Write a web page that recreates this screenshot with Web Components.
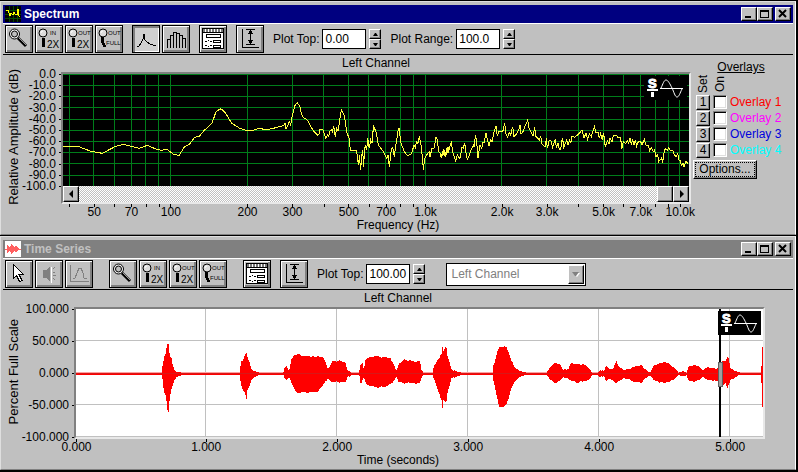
<!DOCTYPE html>
<html lang="en">
<head>
<meta charset="utf-8">
<title>Spectrum</title>
<style>
    html, body {
        margin: 0;
        background: #000;
    }
    body {
        display: grid;
        gap: 1px;
        padding: 1px 2px 2px 0;
        font: 12px/13px "Liberation Sans", Arial, sans-serif;
        color: #000;
    }
    .wide {
        margin-left: 7px;
    }
    .wider {
        margin-left: 12px;
    }
    .group {
        display: flex;
        gap: 2px;
    }
</style>
</head>
<body>
<sound-window title-text="Spectrum" icon="spectrum" active>
    <div class="group" slot="toolbar">
        <tool-button icon="zoom" label="Zoom"></tool-button>
        <tool-button icon="in" label="Zoom in"></tool-button>
        <tool-button icon="out" label="Zoom out"></tool-button>
        <tool-button icon="full" label="Zoom out full"></tool-button>
    </div>
    <div class="group" slot="toolbar">
        <tool-button icon="line" label="Line plot" pressed></tool-button>
        <tool-button icon="bars" label="Bar plot"></tool-button>
    </div>
    <tool-button slot="toolbar" icon="options" label="Options"></tool-button>
    <tool-button slot="toolbar" icon="scale" label="Scale"></tool-button>
    <spin-box slot="toolbar" label="Plot Top:" value="0.00"></spin-box>
    <spin-box slot="toolbar" label="Plot Range:" value="100.0"></spin-box>
    <spectrum-plot></spectrum-plot>
</sound-window>

<sound-window title-text="Time Series" icon="series">
    <div class="group" slot="toolbar">
        <tool-button icon="pointer" label="Select"></tool-button>
        <tool-button icon="speaker" label="Play" off></tool-button>
        <tool-button icon="curve" label="Curve" off></tool-button>
    </div>
    <div class="group wide" slot="toolbar">
        <tool-button icon="zoom" label="Zoom"></tool-button>
        <tool-button icon="in" label="Zoom in"></tool-button>
        <tool-button icon="out" label="Zoom out"></tool-button>
        <tool-button icon="full" label="Zoom out full"></tool-button>
    </div>
    <tool-button class="wide" slot="toolbar" icon="options" label="Options"></tool-button>
    <tool-button slot="toolbar" icon="scale" label="Scale"></tool-button>
    <spin-box slot="toolbar" label="Plot Top:" value="100.00"></spin-box>
    <channel-select class="wider" slot="toolbar"></channel-select>
    <series-plot></series-plot>
</sound-window>

<script>
// raised win95-style button, shared by several shadow roots
const BEVEL = `
    button {
        display: grid;
        place-items: center;
        box-sizing: border-box;
        margin: 0;
        padding: 0;
        border: 1px solid;
        border-color: #fff #000 #000 #fff;
        border-radius: 0;
        background: #c0c0c0;
        box-shadow: inset -1px -1px #808080;
        color: #000;
        font: inherit;
    }
    svg { display: block; }
`;

const lens = `
    <g shape-rendering="geometricPrecision">
        <circle cx="7" cy="7" r="4" fill="#ddd" stroke="#000"/>
        <path d="M5 7a2 2 0 0 1 2-2" stroke="#fff" fill="none"/>
    </g>`;

const ICONS = {
    zoom: `<g shape-rendering="geometricPrecision">
            <path d="M12 12L20 20" stroke="#000" stroke-width="3"/><path d="M13 12L20 19" stroke="#999"/>
            <circle cx="8.500" cy="8" r="5" fill="#f0f0f0" stroke="#000"/>
            <circle cx="8.500" cy="8" r="3" fill="#c0c0c0" stroke="#000"/>
        </g>`,
    in: `${lens}<path d="M7.500 12V21" stroke="#000" stroke-width="3"/>
        <text class="s" x="14" y="9">IN</text><text class="b" x="11" y="22">2X</text>`,
    out: `${lens}<path d="M7.500 12V21" stroke="#000" stroke-width="3"/>
        <text class="s" x="12" y="9">OUT</text><text class="b" x="11" y="22">2X</text>`,
    full: `${lens}<path d="M7 11L6 15L9 21" stroke="#000" stroke-width="3" fill="none"/>
        <text class="s" x="12" y="9">OUT</text><text class="s" x="10" y="19">FULL</text>`,
    line: `<path d="M4 20H6L8 17L9 15L10 13L11 8V12L12 14L14 16L17 18L20 19H23" fill="none" stroke="#000"/>`,
    bars: `<path d="M4.500 22V13.500H7.500V22M7.500 13V9.500H10.500V22M10.500 9V6.500H13.500V22M13.500 7H16.500V22M16.500 9.500H19.500V22M19.500 12.500H22.500V22" fill="none" stroke="#000"/>`,
    options: `<rect x="2.500" y="2.500" width="21" height="20" fill="#fff" stroke="#000"/>
        <path d="M3 4.500H23" stroke="#777" stroke-width="3" stroke-dasharray="2 1"/><path d="M3 6.500H23" stroke="#000"/>
        <path d="M6.500 8.500h14v3h-14zM13.500 14.500h7v2h-7zM13.500 19.500h7v2h-7z" fill="none" stroke="#000"/>
        <path d="M5 15.500h2m1-1h1m1 1h2M5 19.500h2m1 1h1m1-1h2" stroke="#000"/>`,
    scale: `<path d="M5.500 3V21.500H22M9 3.500H18M9 18.500H18M13.500 4V18" fill="none" stroke="#000"/>
        <path d="M13.500 4l3 4h-6zM13.500 18l3-4h-6z" fill="#000"/>`,
    pointer: `<path d="M7.500 3.500V17.500L10.500 14.500L13.500 20.500L16 19.500L13 13.500H17.500Z" fill="#fff" stroke="#000"/>`,
    speaker: `<path d="M7 9H10L14 5V21L10 17H7Z" fill="#808080"/>
        <path d="M17 8l2-2M17 11h2M17 14h3M17 17l2 2M15 21V7" stroke="#808080" fill="none"/><path d="M15.500 6V22" stroke="#fff"/>`,
    curve: `<path d="M4.500 4V20.500H23M7 18L9 17L11 12L13 7H15L17 12L18 17L21 18" fill="none" stroke="#808080"/>`
};

const TITLE_ICONS = {
    spectrum: `<rect width="16" height="16" fill="#000"/>
        <path d="M0 4H16M0 8H16M0 12H16M4 0V16M8 0V16M12 0V16" stroke="#004800"/>
        <path d="M1 5L3 4L5 10L6 7L8 9L9 6L10 8L12 9L13 3L14 10L15 11" fill="none" stroke="#ff0"/>`,
    series: `<rect width="16" height="16" fill="#fff"/><path d="M0 8H16" stroke="#ff6060"/>
        <path d="M2 4L5 7L6 3L10 7L11 4L14 8L11 12L10 9L6 13L5 9L2 12Z" fill="#ff6060"/>`
};

class SoundWindow extends HTMLElement {
    constructor() {
        super();
        this.attachShadow({ mode: 'open' });
        this.shadowRoot.innerHTML = `
            <style>
                ${BEVEL}
                :host {
                    display: block;
                    box-sizing: border-box;
                    padding: 3px 2px 2px;
                    border: 1px solid;
                    border-color: #dfdfdf #fff #808080 #dfdfdf;
                    background: #c0c0c0;
                }
                header {
                    display: flex;
                    align-items: center;
                    height: 18px;
                    padding: 0 2px;
                    background: #808080;
                    color: #c0c0c0;
                }
                :host([active]) header {
                    background: #000080;
                    color: #fff;
                }
                h2 {
                    flex: 1;
                    margin: 0 0 0 3px;
                    font: bold 12px/16px "Liberation Sans", Arial, sans-serif;
                }
                button {
                    width: 16px;
                    height: 14px;
                }
                .close { margin-left: 2px; }
                nav {
                    display: flex;
                    align-items: center;
                    gap: 9px;
                    padding: 1px 2px;
                    border-top: 1px solid #fff;
                    border-bottom: 1px solid #000;
                }
            </style>
            <header>
                <svg width="16" height="16" shape-rendering="crispEdges">${TITLE_ICONS[this.getAttribute('icon')]}</svg>
                <h2>${this.getAttribute('title-text')}</h2>
                <button aria-label="Minimize"><svg width="12" height="10"><path d="M2 8H8" stroke="#000" stroke-width="2"/></svg></button>
                <button aria-label="Maximize"><svg width="12" height="10" shape-rendering="crispEdges"><path d="M1.500 1.500h8v7h-8zM1 2h9" fill="none" stroke="#000"/></svg></button>
                <button class="close" aria-label="Close"><svg width="12" height="10"><path d="M2 1L9 8M9 1L2 8" stroke="#000" stroke-width="2"/></svg></button>
            </header>
            <nav><slot name="toolbar"></slot></nav>
            <slot></slot>
        `;
    }
}
customElements.define('sound-window', SoundWindow);

class ToolButton extends HTMLElement {
    constructor() {
        super();
        this.attachShadow({ mode: 'open' });
        this.shadowRoot.innerHTML = `
            <style>
                ${BEVEL}
                :host { display: block; }
                button {
                    width: 28px;
                    height: 28px;
                    border-color: #000;
                    box-shadow: inset 1px 1px #fff, inset -2px -2px #808080;
                }
                :host([pressed]) button {
                    background: #d0d0d0;
                    box-shadow: inset 2px 2px #808080, inset -1px -1px #fff;
                }
                .s { font-size: 6px; }
                .b { font-size: 10px; }
            </style>
            <button aria-label="${this.getAttribute('label')}" ${this.hasAttribute('off') ? 'disabled' : ''}>
                <svg width="26" height="26" shape-rendering="crispEdges">${ICONS[this.getAttribute('icon')]}</svg>
            </button>
        `;
    }
}
customElements.define('tool-button', ToolButton);

class SpinBox extends HTMLElement {
    constructor() {
        super();
        this.attachShadow({ mode: 'open' });
        this.shadowRoot.innerHTML = `
            <style>
                ${BEVEL}
                :host {
                    display: flex;
                    align-items: center;
                    gap: 3px;
                }
                label { white-space: nowrap; }
                input {
                    box-sizing: border-box;
                    width: 44px;
                    height: 20px;
                    padding: 0 0 0 2px;
                    border: 1px solid #000;
                    border-radius: 0;
                    background: #fff;
                    font: inherit;
                }
                .arrows { display: grid; }
                button {
                    width: 12px;
                    height: 10px;
                }
            </style>
            <label for="value">${this.getAttribute('label')}</label>
            <input id="value" type="text" value="${this.getAttribute('value')}">
            <div class="arrows">
                <button aria-label="Up"><svg width="5" height="3"><path d="M0 3L2 0H3L5 3Z"/></svg></button>
                <button aria-label="Down"><svg width="5" height="3"><path d="M0 0L2 3H3L5 0Z"/></svg></button>
            </div>
        `;
    }
}
customElements.define('spin-box', SpinBox);

class ChannelSelect extends HTMLElement {
    constructor() {
        super();
        this.attachShadow({ mode: 'open' });
        this.shadowRoot.innerHTML = `
            <style>
                :host {
                    display: flex;
                    box-sizing: border-box;
                    width: 140px;
                    height: 23px;
                    padding: 1px;
                    border: 1px solid #000;
                    background: #fff;
                }
                select {
                    flex: 1;
                    appearance: none;
                    margin: 0;
                    padding: 0 3px;
                    border: 0;
                    background: #fff;
                    color: #808080;
                    opacity: 1;
                    font: inherit;
                }
                span {
                    display: grid;
                    place-items: center;
                    width: 14px;
                    border: 1px solid;
                    border-color: #fff #000 #000 #fff;
                    background: #c0c0c0;
                    box-shadow: inset -1px -1px #808080;
                    pointer-events: none;
                }
            </style>
            <select aria-label="Channel" disabled><option>Left Channel</option></select>
            <span><svg width="8" height="5"><path d="M1 1H8L5 5Z" fill="#fff"/><path d="M0 0H7L4 4H3Z" fill="#808080"/></svg></span>
        `;
    }
}
customElements.define('channel-select', ChannelSelect);

class BrandLogo extends HTMLElement {
    constructor() {
        super();
        this.attachShadow({ mode: 'open' });
        this.shadowRoot.innerHTML = `
            <style>
                :host { display: block; }
                svg { display: block; background: #000; }
                text { font: bold 13px "Liberation Sans", Arial, sans-serif; }
            </style>
            <svg width="43" height="24" fill="#fff" stroke="#fff">
                <text x="4" y="12" stroke-width="1">S</text>
                <path d="M3 14H14" stroke-width="2" fill="none"/>
                <path d="M8.500 16V21" stroke-width="3" fill="none"/>
                <path d="M16 12.500H39M17 12C19 8 20 4 22 4S26 8 28 12S31 21 33 21S36 17 38 13" stroke-width="1" fill="none"/>
            </svg>
        `;
    }
}
customElements.define('brand-logo', BrandLogo);

// Axes and frame round whatever is slotted in.
// x-ticks holds "position:label" pairs, y-ticks just labels from top to bottom.
class PlotFrame extends HTMLElement {
    constructor() {
        super();
        this.attachShadow({ mode: 'open' });
    }

    connectedCallback() {
        const yTicks = this.getAttribute('y-ticks').split(' ').map(t => `<li>${t}</li>`).join('');
        let last = 0;
        const xTicks = this.getAttribute('x-ticks').split(' ').map(pair => {
            const [pos, text] = pair.split(':');
            const gap = pos - last;
            last = +pos;
            return `<i style="flex:${gap}"></i><li>${text}</li>`;
        }).join('');
        this.shadowRoot.innerHTML = `
            <style>
                :host {
                    display: grid;
                    grid-template-columns: 18px var(--axis) minmax(0, 1fr) var(--side);
                    grid-template-rows: 17px auto 15px 13px;
                }
                .head {
                    grid-area: 1 / 3 / 2 / 4;
                    line-height: 17px;
                    text-align: center;
                }
                :host([centered]) .head { grid-column: 1 / 5; }
                .y-title {
                    grid-area: 1 / 1 / 4 / 2;
                    justify-self: end;
                    align-self: center;
                    writing-mode: vertical-rl;
                    transform: rotate(180deg);
                    white-space: nowrap;
                    font-size: 13px;
                    line-height: 15px;
                }
                ul {
                    display: flex;
                    margin: 0;
                    padding: 0;
                    list-style: none;
                }
                .y {
                    grid-area: 2 / 2;
                    flex-direction: column;
                    justify-content: space-between;
                    height: calc(var(--plot) + 1px);
                    margin-top: 2px;
                    line-height: 11px;
                }
                .y li {
                    display: flex;
                    align-items: center;
                    justify-content: flex-end;
                    gap: 3px;
                    height: 1px;
                }
                .y li::after {
                    content: "";
                    width: 2px;
                    height: 1px;
                    background: #000;
                }
                .frame {
                    grid-area: 2 / 3;
                    border: 2px solid;
                    border-color: #808080 #e8e8e8 #e8e8e8 #808080;
                }
                .x {
                    grid-area: 3 / 3;
                    margin: 0 2px;
                    overflow: visible;
                }
                .x li {
                    display: flex;
                    flex-direction: column;
                    align-items: center;
                    width: 1px;
                    margin-right: -1px;
                    white-space: nowrap;
                }
                .x li::before {
                    content: "";
                    flex: none;
                    width: 1px;
                    height: 3px;
                    margin-bottom: -1px;
                    background: #000;
                }
                .x-title {
                    grid-area: 4 / 1 / 5 / 5;
                    text-align: center;
                }
                .side { grid-area: 1 / 4 / 4 / 5; }
            </style>
            <div class="head">Left Channel</div>
            <div class="y-title">${this.getAttribute('y-title')}</div>
            <ul class="y">${yTicks}</ul>
            <div class="frame"><slot></slot></div>
            <ul class="x">${xTicks}<i style="flex:${this.getAttribute('x-end') - last}"></i></ul>
            <div class="x-title">${this.getAttribute('x-title')}</div>
            <div class="side"><slot name="side"></slot></div>
        `;
    }
}
customElements.define('plot-frame', PlotFrame);

class OverlayPanel extends HTMLElement {
    constructor() {
        super();
        this.attachShadow({ mode: 'open' });
        const rows = ['#f00', '#f0f', '#00d', '#0ff'].map((color, i) => `
            <button class="set">${i + 1}</button>
            <input type="checkbox" id="on${i}">
            <label for="on${i}" style="color:${color}">Overlay ${i + 1}</label>
        `).join('');
        this.shadowRoot.innerHTML = `
            <style>
                ${BEVEL}
                :host {
                    display: block;
                    padding: 5px 4px 0 2px;
                }
                h3 {
                    margin: 0;
                    font: inherit;
                    line-height: 14px;
                    text-align: center;
                    text-decoration: underline;
                }
                .rows {
                    display: grid;
                    grid-template-columns: 14px 14px auto;
                    grid-template-rows: 20px repeat(4, 16px);
                    align-items: center;
                    column-gap: 3px;
                    padding-left: 3px;
                }
                .up {
                    writing-mode: vertical-rl;
                    transform: rotate(180deg);
                    line-height: 14px;
                }
                .set {
                    width: 14px;
                    height: 15px;
                }
                input {
                    appearance: none;
                    box-sizing: border-box;
                    width: 14px;
                    height: 14px;
                    margin: 0;
                    border: 1px solid;
                    border-color: #808080 #fff #fff #808080;
                    background: #fff;
                    box-shadow: inset 1px 1px #000, inset -1px -1px #dfdfdf;
                }
                .options {
                    width: 64px;
                    height: 19px;
                    margin-top: 2px;
                }
                .options span {
                    padding: 0 3px;
                    border: 1px dotted #000;
                }
            </style>
            <h3>Overlays</h3>
            <div class="rows">
                <span class="up">Set</span><span class="up">On</span><span></span>
                ${rows}
            </div>
            <button class="options"><span>Options...</span></button>
        `;
    }
}
customElements.define('overlay-panel', OverlayPanel);

const PLOT_STYLE = `
    :host { display: block; }
    .canvas { position: relative; }
    svg {
        display: block;
        width: 100%;
        height: var(--plot);
    }
    path, line { vector-effect: non-scaling-stroke; }
    brand-logo {
        position: absolute;
        top: 2px;
        right: 2px;
    }
`;

// curve in chunks: start x, then x y pairs relative to it
const SPECTRUM = [
    [0, '187 259 235 259 252 266 270 273 290 277 307 280 326 270 345 260 370 253 390 258 418 265 442 256 465 266 485 271 500 267 520 282 537 287 552 262 568 253 584 232 598 229 612 212 636 190 648 155 662 146 674 157'],
    [660, '0 146 10 150 22 168 35 190 58 204 75 210 93 213 120 204 135 210 160 205 190 197 195 190 198 208 208 185 212 195 216 170 220 155 226 133 232 128 240 140 244 160 250 172 262 180 270 195 280 212 293 225 298 222 300 208 308 208 312 220 317 235 322 225 326 230 330 212 335 208 337 218 341 198 346 230 350 205 354 212 358 190 361 165 364 150 370 160 374 170 377 195 380 215 387 235 391 270 410 272 413 300 416 315 418 285 422 330 425 290 428 270 431 320 433 275 436 255 440 270 443 235 448 265 452 240 456 250 459 215 461 200 468 215 475 255 490 275 500 295 504 285 508 322 512 285 514 268 518 262 523 290 527 255 530 245 533 215 537 205 543 250 553 275 562 287 572 283 575 280 582 255 586 262 590 245 594 250 598 228 603 255 608 300 610 330 614 295 620 285 628 275 630 290 636 265 642 265 648 232 652 240 656 275 661 280 665 290 672 270 678 285 684 262 688 268'],
    [1320, '0 290 5 285 10 270 16 290 20 270 24 280 28 262 34 247 38 275 43 290 47 303 52 285 55 290 60 295 66 262 70 265 74 248 78 280 82 297 88 285 92 272 100 255 103 262 106 225 110 245 114 293 120 255 125 265 129 245 132 250 138 220 142 238 147 258 152 240 156 245 162 215 168 198 172 228 176 215 186 215 190 210 194 188 198 222 203 232 208 218 212 225 218 200 222 230 230 222 236 210 240 195 243 222 249 215 254 200 259 190 263 180 267 205 272 215 279 228 284 202 288 230 298 240 302 228 306 252 312 258 316 260 319 235 322 265 328 240 332 240 338 262 346 238 349 262 354 250 358 268 362 268 365 245 368 235 371 262 376 250 380 240 384 255 389 240 392 250 396 228 404 232 412 225 420 218 426 210 432 235 438 218 443 238 448 222 454 230 459 212 463 200 468 218 474 216 478 235 482 220 487 240 490 218 493 235 496 262 502 242 507 252 510 235 516 245 520 228 528 225 534 232 542 232 545 268 550 245 557 250 562 242 566 250 570 235 574 252 578 240 582 255 586 240 590 258 595 245 602 245 606 255 613 238 618 255 625 255 629 272 634 262 640 275 644 270 648 290 653 285 656 305 664 295 668 305 672 280 676 265 682 272 686 263 692 272 698 270 703 285 708 290 713 280 717 300 720 300 724 315 729 310 732 320 738 303 744 312']
];

class SpectrumPlot extends HTMLElement {
    constructor() {
        super();
        this.attachShadow({ mode: 'open' });
        // 764 units per decade, 100 Hz at 322
        const xOf = (hz) => Math.round((Math.log10(hz) - 2) * 764 + 322);
        const lines = [];
        for (const decade of [10, 100, 1000]) {
            for (let n = 1; n < 10; n++) {
                if (n * decade >= 40) lines.push(n * decade);
            }
        }
        lines.push(10000);
        const names = { 50: '50', 70: '70', 100: '100', 200: '200', 300: '300', 500: '500', 700: '700', 1000: '1.0k', 2000: '2.0k', 3000: '3.0k', 5000: '5.0k', 7000: '7.0k', 10000: '10.0k' };
        const ticks = lines.map(hz => `${xOf(hz)}:${names[hz] || ''}`).join(' ');
        const vertical = lines.map(hz => `M${xOf(hz)} 0V336`).join('');
        const horizontal = Array.from({ length: 10 }, (_, i) => `M0 ${i * 34 - i * 0.4 + 1}H1878`).join('');
        const points = SPECTRUM.map(([start, text]) =>
            text.split(' ').map((v, i) => i % 2 ? v - 42 : +v + start - 189).join(' ')).join(' ');

        this.shadowRoot.innerHTML = `
            <style>
                ${PLOT_STYLE}
                ${BEVEL}
                :host {
                    --plot: 112px;
                    --axis: 40px;
                    --side: 102px;
                }
                .canvas { background: #000; }
                .scroll {
                    display: flex;
                    justify-content: flex-end;
                    height: 16px;
                    background: repeating-conic-gradient(#fff 0 25%, #c0c0c0 0 50%) 0 0 / 2px 2px;
                }
                .scroll button {
                    width: 16px;
                    height: 16px;
                }
                .scroll svg {
                    width: 5px;
                    height: 8px;
                }
                .left { margin-right: auto; }
            </style>
            <plot-frame y-title="Relative Amplitude (dB)" x-title="Frequency (Hz)"
                y-ticks="0.0 -10.0 -20.0 -30.0 -40.0 -50.0 -60.0 -70.0 -80.0 -90.0 -100.0"
                x-ticks="${ticks}" x-end="1878">
                <div class="canvas">
                    <svg viewBox="0 0 1878 336" preserveAspectRatio="none" shape-rendering="crispEdges" fill="none">
                        <path d="${vertical}${horizontal}" stroke="#007d1a"/>
                        <path d="M${points}" stroke="#ffff40"/>
                    </svg>
                    <brand-logo></brand-logo>
                </div>
                <div class="scroll">
                    <button class="left" aria-label="Scroll left"><svg viewBox="0 0 5 8"><path d="M4 0V8L0 4Z"/></svg></button>
                    <button aria-label="Scroll position"></button>
                    <button aria-label="Scroll right"><svg viewBox="0 0 5 8"><path d="M1 0V8L5 4Z"/></svg></button>
                </div>
                <overlay-panel slot="side"></overlay-panel>
            </plot-frame>
        `;
    }
}
customElements.define('spectrum-plot', SpectrumPlot);

// envelope in chunks: start x, then x/top/bottom triples
const SERIES = [
    [0, '228 248 254 486 248 254 487 232 262 490 215 290 494 195 312 499 190 316 500 163 345 504 162 370 507 163 362 509 198 325 514 202 300 518 225 285 524 240 270 535 246 258 545 248 256 560 248 254 720 248 254 721 230 270 724 212 285 729 212 300 734 198 308 740 187 327 742 200 302 748 215 290 754 238 270 765 243 262 778 248 254'],
    [810, '0 248 254 40 248 254 43 235 262 50 227 272 54 240 262 60 236 265 63 210 275 70 200 290 80 195 308 85 192 310 95 200 305 110 198 308 125 200 305 140 201 307 155 200 290 165 212 275 172 235 268 180 228 272 188 213 276 205 213 276 225 215 278 232 240 262 245 248 254 266 248 254 270 235 262 272 222 285 278 220 270 282 240 262 286 210 275 292 203 285 320 198 292 345 203 290 362 205 282 372 225 272 380 242 262 386 222 276 400 210 280 425 212 278 435 218 280 450 212 278 454 238 265 460 248 254 488 248 254 492 225 268 500 215 290 508 205 310 512 195 325 516 190 332 517 168 360 520 185 330 527 170 335 530 175 332 532 195 310 538 215 290 544 238 265 560 244 260 575 248 254 668 248 254 670 225 270 675 215 290 682 185 325 688 172 352 700 170 350 710 172 340 716 188 325 722 205 300 735 235 272 750 243 260 770 248 254 826 248 254'],
    [1620, '20 248 254 28 235 265 40 222 275 52 220 278 62 225 270 70 240 262 85 238 265 93 220 272 110 222 278 135 225 272 148 235 268 156 248 256 172 248 256 182 240 262 192 243 258 198 228 272 210 240 265 220 235 272 229 213 280 238 232 272 255 240 265 275 235 272 285 230 275 298 228 275 303 225 280 312 235 268 330 248 256 340 228 268 355 222 275 370 217 278 385 220 275 398 230 270 408 240 262 415 248 256 430 243 258 440 248 256 446 230 272 460 226 275 475 228 270 488 242 260 497 232 268 515 235 270 530 236 272 540 232 272 545 215 285 557 212 280 562 200 295 566 205 285 572 235 270 585 243 262 600 248 254 664 248 254 666 172 352 670 172 352']
];

class SeriesPlot extends HTMLElement {
    constructor() {
        super();
        this.attachShadow({ mode: 'open' });
        const top = [];
        const bottom = [];
        for (const [start, text] of SERIES) {
            const v = text.split(' ').map(Number);
            for (let i = 0; i < v.length; i += 3) {
                const x = v[i] + start - 228;
                const next = i + 3 < v.length ? v[i + 3] + start - 228 : x;
                top.push(`${x} ${v[i + 1] - 57}`);
                bottom.unshift(`${x} ${v[i + 2] - 57}`);
                // a little ripple on the wide parts
                if (v[i + 2] - v[i + 1] > 20 && next - x > 6) {
                    for (let m = x + 3; m < next - 3; m += 3) {
                        const t = (m - x) / (next - x);
                        const j = (m * 7 % 5) - 2;
                        top.push(`${m} ${v[i + 1] + (v[i + 4] - v[i + 1]) * t - 57 + j}`);
                        bottom.unshift(`${m} ${v[i + 2] + (v[i + 5] - v[i + 2]) * t - 57 - j}`);
                    }
                }
            }
        }
        // 393 units per second, the first pixel column is a little past zero
        const seconds = [0, 389, 782, 1175, 1568, 1961];
        const ticks = seconds.map((x, s) => `${x}:${s}.000`).join(' ');
        const vertical = seconds.slice(1).map(x => `M${x} 0V384`).join('');
        this.shadowRoot.innerHTML = `
            <style>
                ${PLOT_STYLE}
                :host {
                    --plot: 128px;
                    --axis: 53px;
                    --side: 28px;
                }
                .canvas { background: #fff; }
            </style>
            <plot-frame centered y-title="Percent Full Scale" x-title="Time (seconds)"
                y-ticks="100.000 50.000 0.000 -50.000 -100.000"
                x-ticks="${ticks}" x-end="2061">
                <div class="canvas">
                    <svg viewBox="0 0 2061 384" preserveAspectRatio="none" shape-rendering="crispEdges">
                        <path d="${vertical}M0 95H2061M0 287H2061M0 382H2061" stroke="#c0c0c0"/>
                        <path d="M0 191H2061" stroke="#ffa0a0"/>
                        <path d="M${top.join(' ')} ${bottom.join(' ')}Z" fill="#f00"/>
                        <path d="M0 194H2061" stroke="#d81818"/>
                        <path d="M1933 0V384" stroke="#000" stroke-width="2"/>
                        <path d="M1927 160H1939V231H1927Z" fill="#a0a0a0" stroke="#606060"/>
                    </svg>
                    <brand-logo></brand-logo>
                </div>
            </plot-frame>
        `;
    }
}
customElements.define('series-plot', SeriesPlot);
</script>
</body>
</html>
